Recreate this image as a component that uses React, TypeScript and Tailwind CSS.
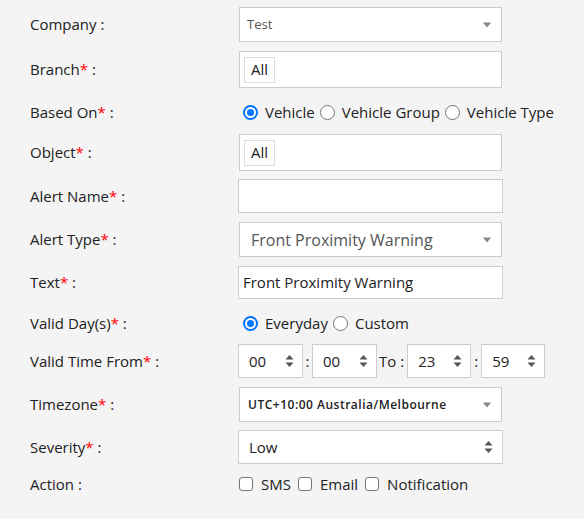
import React from "react";

const Star = () => <span className="text-[#ff0000]">*</span>;

function Label({ text, req }: { text: string; req?: boolean }) {
  return (
    <div className="w-[208px] shrink-0 pl-[30px] text-[15px] text-[#222]">
      {text}
      {req && <Star />} :
    </div>
  );
}

const SelectArrow = () => (
  <svg width="10" height="6" viewBox="0 0 10 6" className="shrink-0">
    <path d="M1 0.5 L9 0.5 L5 5.5 Z" fill="#888" />
  </svg>
);

const Spinner = () => (
  <svg width="9" height="14" viewBox="0 0 9 14" className="shrink-0">
    <path d="M4.5 1 L8.5 5.5 L0.5 5.5 Z" fill="#555" />
    <path d="M0.5 8.5 L8.5 8.5 L4.5 13 Z" fill="#555" />
  </svg>
);

const Radio = ({ checked, label }: { checked?: boolean; label: string }) => (
  <span className="flex items-center">
    {checked ? (
      <span className="w-[15px] h-[15px] rounded-full border-2 border-[#0075ff] bg-white flex items-center justify-center mr-[7px]">
        <span className="w-[7px] h-[7px] rounded-full bg-[#0075ff]" />
      </span>
    ) : (
      <span className="w-[15px] h-[15px] rounded-full border border-[#767676] bg-white mr-[7px]" />
    )}
    <span>{label}</span>
  </span>
);

const Check = ({ label }: { label: string }) => (
  <span className="flex items-center">
    <span className="w-[14px] h-[14px] rounded-[3px] border border-[#767676] bg-white mr-[8px]" />
    <span>{label}</span>
  </span>
);

const TimeBox = ({ v, w }: { v: string; w: string }) => (
  <div className={`${w} h-[34px] border border-[#ccc] bg-white flex items-center justify-between pl-[10px] pr-[8px] text-[15px] text-[#222]`}>
    <span>{v}</span>
    <Spinner />
  </div>
);

export default function App() {
  return (
    <div
      className="w-[584px] h-[519px] bg-[#f4f4f4] text-[#222] overflow-hidden"
      style={{ fontFamily: '"Open Sans", "Noto Sans", sans-serif' }}
    >
      <div className="flex flex-col pt-[7px]">
        {/* Company */}
        <div className="flex items-center h-[35px]">
          <Label text="Company" />
          <div className="ml-[31px] w-[263px] h-[35px] border border-[#ccc] bg-white flex items-center justify-between pl-[7px] pr-[9px]">
            <span className="text-[13px] text-[#555]">Test</span>
            <SelectArrow />
          </div>
        </div>
        {/* Branch */}
        <div className="flex items-center h-[37px] mt-[9px]">
          <Label text="Branch" req />
          <div className="ml-[31px] w-[263px] h-[37px] border border-[#ccc] bg-white flex items-center pl-[4px]">
            <span className="h-[26px] px-[6px] border border-[#ddd] flex items-center text-[15px] text-[#222]">All</span>
          </div>
        </div>
        {/* Based On */}
        <div className="flex items-center h-[30px] mt-[9px] text-[15px]">
          <Label text="Based On" req />
          <div className="ml-[35px] flex items-center gap-[5px]">
            <Radio checked label="Vehicle" />
            <Radio label="Vehicle Group" />
            <Radio label="Vehicle Type" />
          </div>
        </div>
        {/* Object */}
        <div className="flex items-center h-[37px] mt-[7px]">
          <Label text="Object" req />
          <div className="ml-[31px] w-[263px] h-[37px] border border-[#ccc] bg-white flex items-center pl-[4px]">
            <span className="h-[26px] px-[6px] border border-[#ddd] flex items-center text-[15px] text-[#222]">All</span>
          </div>
        </div>
        {/* Alert Name */}
        <div className="flex items-center h-[34px] mt-[8px]">
          <Label text="Alert Name" req />
          <div className="ml-[30px] w-[265px] h-[34px] border border-[#ccc] bg-white" />
        </div>
        {/* Alert Type */}
        <div className="flex items-center h-[35px] mt-[9px]">
          <Label text="Alert Type" req />
          <div className="ml-[31px] w-[263px] h-[35px] border border-[#ccc] bg-white flex items-center justify-between pl-[11px] pr-[9px]">
            <span className="text-[16px] text-[#555]">Front Proximity Warning</span>
            <SelectArrow />
          </div>
        </div>
        {/* Text */}
        <div className="flex items-center h-[33px] mt-[9px]">
          <Label text="Text" req />
          <div className="ml-[30px] w-[265px] h-[33px] border border-[#ccc] bg-white flex items-center pl-[4px] text-[15px] text-[#222]">
            Front Proximity Warning
          </div>
        </div>
        {/* Valid Days */}
        <div className="flex items-center h-[30px] mt-[9px] text-[15px]">
          <Label text="Valid Day(s)" req />
          <div className="ml-[35px] flex items-center gap-[5px]">
            <Radio checked label="Everyday" />
            <Radio label="Custom" />
          </div>
        </div>
        {/* Valid Time */}
        <div className="flex items-center h-[34px] mt-[6px] text-[15px]">
          <Label text="Valid Time From" req />
          <div className="ml-[30px] flex items-center">
            <TimeBox v="00" w="w-[65px]" />
            <span className="w-[9px] text-center">:</span>
            <TimeBox v="00" w="w-[65px]" />
            <span className="pl-[2px] pr-[3px]">To :</span>
            <TimeBox v="23" w="w-[64px]" />
            <span className="w-[10px] text-center">:</span>
            <TimeBox v="59" w="w-[64px]" />
          </div>
        </div>
        {/* Timezone */}
        <div className="flex items-center h-[35px] mt-[9px]">
          <Label text="Timezone" req />
          <div className="ml-[31px] w-[263px] h-[35px] border border-[#ccc] bg-white flex items-center justify-between pl-[8px] pr-[9px]">
            <span className="text-[12px] font-semibold tracking-[0.5px] text-[#222]">UTC+10:00 Australia/Melbourne</span>
            <SelectArrow />
          </div>
        </div>
        {/* Severity */}
        <div className="flex items-center h-[34px] mt-[8px]">
          <Label text="Severity" req />
          <div className="ml-[30px] w-[265px] h-[34px] border border-[#ccc] bg-white flex items-center justify-between pl-[10px] pr-[9px]">
            <span className="text-[15px] text-[#222]">Low</span>
            <Spinner />
          </div>
        </div>
        {/* Action */}
        <div className="flex items-center h-[28px] mt-[6px] text-[15px]">
          <Label text="Action" />
          <div className="ml-[31px] flex items-center gap-[7px]">
            <Check label="SMS" />
            <Check label="Email" />
            <Check label="Notification" />
          </div>
        </div>
      </div>
    </div>
  );
}
